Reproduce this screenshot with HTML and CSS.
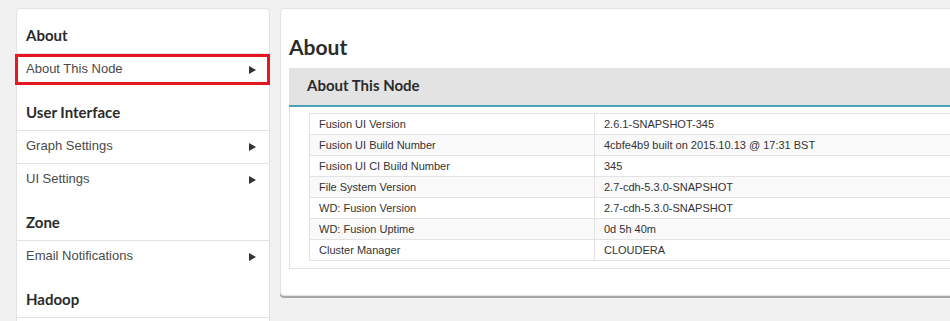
FILE: index.html
```html
<!DOCTYPE html>
<html>
<head>
<meta charset="utf-8">
<link rel="stylesheet" href="styles.css">
</head>
<body>
<div class="layout">
  <nav class="sidebar">
    <div class="nav-head">About</div>
    <a class="nav-item active">About This Node<svg class="arrow" viewBox="0 0 7 8"><polygon points="0,0 7,4 0,8"/></svg></a>
    <div class="nav-head">User Interface</div>
    <a class="nav-item">Graph Settings<svg class="arrow" viewBox="0 0 7 8"><polygon points="0,0 7,4 0,8"/></svg></a>
    <a class="nav-item">UI Settings<svg class="arrow" viewBox="0 0 7 8"><polygon points="0,0 7,4 0,8"/></svg></a>
    <div class="nav-head">Zone</div>
    <a class="nav-item">Email Notifications<svg class="arrow" viewBox="0 0 7 8"><polygon points="0,0 7,4 0,8"/></svg></a>
    <div class="nav-head">Hadoop</div>
    <div class="nav-item blank"></div>
  </nav>
  <main class="main">
    <h2 class="title">About</h2>
    <section class="card">
      <div class="card-head">About This Node</div>
      <div class="card-body">
        <table class="info">
          <tbody>
            <tr><td>Fusion UI Version</td><td>2.6.1-SNAPSHOT-345</td></tr>
            <tr><td>Fusion UI Build Number</td><td>4cbfe4b9 built on 2015.10.13 @ 17:31 BST</td></tr>
            <tr><td>Fusion UI CI Build Number</td><td>345</td></tr>
            <tr><td>File System Version</td><td>2.7-cdh-5.3.0-SNAPSHOT</td></tr>
            <tr><td>WD: Fusion Version</td><td>2.7-cdh-5.3.0-SNAPSHOT</td></tr>
            <tr><td>WD: Fusion Uptime</td><td>0d 5h 40m</td></tr>
            <tr><td>Cluster Manager</td><td>CLOUDERA</td></tr>
          </tbody>
        </table>
      </div>
    </section>
  </main>
</div>
</body>
</html>
```

FILE: styles.css
```css
html, body {
  margin: 0;
  padding: 0;
  height: 100%;
  overflow: hidden;
}
body {
  background: #f1f1f1;
  font-family: "Liberation Sans", Arial, sans-serif;
  color: #333;
}
.layout {
  display: flex;
  align-items: flex-start;
  gap: 10px;
  padding: 8px 0 0 16px;
  width: 1000px;
}
.sidebar {
  width: 254px;
  flex: none;
  box-sizing: border-box;
  background: #fff;
  border: 1px solid #e2e2e2;
  border-radius: 4px;
  display: flex;
  flex-direction: column;
  height: 400px;
}
.nav-head {
  font-family: Lato, "Liberation Sans", sans-serif;
  font-weight: 700;
  font-size: 15px;
  line-height: 18px;
  color: #2b2b2b;
  padding: 17px 9px 9px;
}
.nav-item {
  position: relative;
  display: flex;
  align-items: center;
  justify-content: space-between;
  border-top: 1px solid #e3e3e3;
  padding: 6px 13px 8px 9px;
  font-size: 13px;
  line-height: 18px;
  color: #4a4a4a;
}
.nav-item.blank {
  height: 18px;
}
.arrow {
  width: 7px;
  height: 8px;
  fill: #333;
  margin-top: 1px;
}
.nav-item.active::after {
  content: "";
  position: absolute;
  left: -2px;
  right: -1px;
  top: 0;
  height: 31px;
  box-sizing: border-box;
  border: 3px solid #e8161f;
}
.main {
  width: 700px;
  flex: none;
  box-sizing: border-box;
  background: #fff;
  border: 1px solid #e2e2e2;
  border-radius: 4px;
  box-shadow: 0 2px 0 #a8a8a8;
  padding: 8px 0 26px 8px;
}
.title {
  font-family: Lato, "Liberation Sans", sans-serif;
  font-weight: 700;
  font-size: 21px;
  line-height: 24px;
  color: #2b2b2b;
  margin: 18px 0 9px;
}
.card {
  border: 1px solid #e2e2e2;
  border-right: none;
}
.card-head {
  margin: -1px 0 0 -1px;
  background: #e3e3e3;
  border-bottom: 2px solid #4aa2b8;
  font-family: Lato, "Liberation Sans", sans-serif;
  font-weight: 700;
  font-size: 15px;
  line-height: 18px;
  color: #2b2b2b;
  padding: 8px 18px 11px;
}
.card-body {
  padding: 6px 0 7px 19px;
}
.info {
  border-collapse: collapse;
  width: 660px;
  font-size: 11px;
  color: #333;
}
.info td {
  border: 1px solid #e3e3e3;
  height: 20px;
  line-height: 20px;
  padding: 0 9px;
  white-space: nowrap;
}
.info td:first-child {
  width: 266px;
}
.info tr:nth-child(even) td {
  background: #f9f9f9;
}
```
